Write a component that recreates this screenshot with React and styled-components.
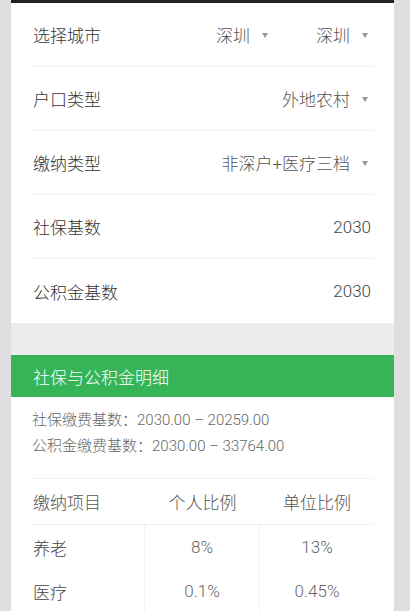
import React from 'react';
import styled, { createGlobalStyle } from 'styled-components';

const GlobalStyle = createGlobalStyle`
  html, body {
    margin: 0;
    padding: 0;
    background: #dedede;
  }
  body {
    font-family: Roboto, "Noto Sans CJK SC", sans-serif;
    font-weight: 300;
    -webkit-font-smoothing: antialiased;
  }
  * {
    box-sizing: border-box;
  }
`;

const Page = styled.div`
  width: 383px;
  margin-left: 11px;
  background: #fff;
  min-height: 611px;
`;

const TopBar = styled.div`
  height: 3px;
  background: #222;
`;

const FormList = styled.div`
  padding: 0 20px 0 21px;
`;

const Row = styled.div`
  height: 64px;
  display: flex;
  align-items: center;
  justify-content: space-between;
  border-bottom: ${p => (p.$last ? 'none' : '1px solid #f1f1f1')};
`;

const Label = styled.span`
  font-size: 17px;
  color: #333;
  padding-left: 1px;
`;

const Value = styled.span`
  font-size: 17px;
  color: #444;
  padding-right: 3px;
`;

const Selects = styled.div`
  display: flex;
  align-items: center;
  gap: 48px;
  padding-right: 6px;
`;

const Select = styled.div`
  display: flex;
  align-items: center;
  gap: 12px;
  font-size: 17px;
  color: #555;
`;

const Caret = styled.span`
  width: 0;
  height: 0;
  border-left: 3.5px solid transparent;
  border-right: 3.5px solid transparent;
  border-top: 5px solid #999;
  margin-top: 2px;
`;

const Band = styled.div`
  height: 32px;
  background: #ececec;
`;

const SectionHeader = styled.div`
  height: 42px;
  display: flex;
  align-items: center;
  padding-left: 22px;
  background: #35b558;
  color: #fff;
  font-size: 17px;
`;

const Detail = styled.div`
  padding: 0 20px 0 21px;
`;

const Ranges = styled.div`
  padding: 10px 0 19px;
  border-bottom: 1px solid #f1f1f1;
`;

const RangeLine = styled.div`
  font-size: 15px;
  line-height: 26px;
  color: #666;
`;

const Table = styled.div`
  display: grid;
  grid-template-columns: 113px 115px 1fr;
`;

const Cell = styled.div`
  height: ${p => (p.$head ? '46px' : '44px')};
  display: flex;
  align-items: center;
  justify-content: ${p => (p.$first ? 'flex-start' : 'center')};
  padding-left: ${p => (p.$first ? '1px' : '0')};
  font-size: 17px;
  color: ${p => (p.$head ? '#555' : p.$first ? '#444' : '#666')};
  border-bottom: ${p => (p.$head ? '1px solid #f1f1f1' : 'none')};
  border-right: ${p => (!p.$head && !p.$lastCol ? '1px solid #f1f1f1' : 'none')};
`;

const fields = [
  { label: '户口类型', select: '外地农村' },
  { label: '缴纳类型', select: '非深户+医疗三档' },
  { label: '社保基数', value: '2030' },
  { label: '公积金基数', value: '2030' },
];

const rates = [
  ['养老', '8%', '13%'],
  ['医疗', '0.1%', '0.45%'],
];

export default function App() {
  return (
    <>
      <GlobalStyle />
      <Page>
        <TopBar />
        <FormList>
          <Row>
            <Label>选择城市</Label>
            <Selects>
              <Select>深圳<Caret /></Select>
              <Select>深圳<Caret /></Select>
            </Selects>
          </Row>
          {fields.map((f, i) => (
            <Row key={f.label} $last={i === fields.length - 1}>
              <Label>{f.label}</Label>
              {f.select ? (
                <Selects>
                  <Select>{f.select}<Caret /></Select>
                </Selects>
              ) : (
                <Value>{f.value}</Value>
              )}
            </Row>
          ))}
        </FormList>
        <Band />
        <SectionHeader>社保与公积金明细</SectionHeader>
        <Detail>
          <Ranges>
            <RangeLine>社保缴费基数：2030.00 – 20259.00</RangeLine>
            <RangeLine>公积金缴费基数：2030.00 – 33764.00</RangeLine>
          </Ranges>
          <Table>
            <Cell $head $first>缴纳项目</Cell>
            <Cell $head>个人比例</Cell>
            <Cell $head $lastCol>单位比例</Cell>
            {rates.map(r => (
              <React.Fragment key={r[0]}>
                <Cell $first>{r[0]}</Cell>
                <Cell>{r[1]}</Cell>
                <Cell $lastCol>{r[2]}</Cell>
              </React.Fragment>
            ))}
          </Table>
        </Detail>
      </Page>
    </>
  );
}
